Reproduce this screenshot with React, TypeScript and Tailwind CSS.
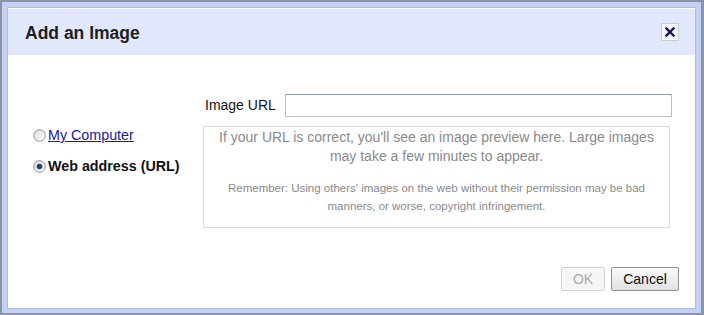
import React from "react";

function Radio({ checked }: { checked?: boolean }) {
  return (
    <svg width="13" height="13" viewBox="0 0 13 13" className="shrink-0">
      <defs>
        <linearGradient id={checked ? "rg1" : "rg0"} x1="0" y1="0" x2="1" y2="1">
          <stop offset="0" stopColor="#d8d8d8" />
          <stop offset="1" stopColor="#ffffff" />
        </linearGradient>
      </defs>
      <circle cx="6.5" cy="6.5" r="5.8" fill={`url(#${checked ? "rg1" : "rg0"})`} stroke="#8e959c" strokeWidth="1" />
      {checked && <circle cx="6.5" cy="6.5" r="2.8" fill="#2a3f6a" />}
    </svg>
  );
}

export default function App() {
  return (
    <div className="w-[704px] h-[315px] bg-[#c4d1f4] border-[2px] border-r-[3px] border-[#8c93a2] pl-[5px] pt-[5px] pr-[5px] pb-[4px] flex" style={{ fontFamily: "Arial, 'Liberation Sans', sans-serif" }}>
      <div className="flex-1 flex flex-col bg-white border border-[#aebde6]">
        <div className="h-[46px] bg-[#e1e8fb] flex items-center justify-between pl-[17px] pr-[16px] mt-[1px]">
          <div className="text-[17.5px] font-bold text-[#1e1e1e] pt-[2px]">Add an Image</div>
          <div className="w-[18px] h-[18px] border border-[#c8ccd6] bg-[#f4f6fc] flex items-center justify-center">
            <svg width="10" height="10" viewBox="0 0 10 10">
              <path d="M1.5 1.5 L8.5 8.5 M8.5 1.5 L1.5 8.5" stroke="#15155e" strokeWidth="2.4" strokeLinecap="square" />
            </svg>
          </div>
        </div>
        <div className="flex pt-[39px]">
          <div className="w-[195px] pl-[25px] pt-[34px] flex flex-col gap-[17px] text-[14px]">
            <div className="flex items-center gap-[2px]">
              <Radio />
              <span className="text-[#1a1a99] underline leading-[14px] text-[14.3px]">My Computer</span>
            </div>
            <div className="flex items-center gap-[2px]">
              <Radio checked />
              <span className="font-bold text-[#111] leading-[14px] text-[14.3px]">Web address (URL)</span>
            </div>
          </div>
          <div className="w-[471px] flex flex-col">
            <div className="flex items-center">
              <span className="text-[14px] text-[#111] ml-[2px] w-[80px]">Image URL</span>
              <div className="w-[387px] h-[23px] border border-[#b5bcc5] border-t-[#8f9aa6] rounded-[1px]" />
            </div>
            <div className="mt-[9px] w-[467px] h-[102px] border border-[#dcdcdc] text-center text-[#8a8a8a]">
              <div className="text-[14px] leading-[19px] pt-[1px] px-[4px]">
                If your URL is correct, you'll see an image preview here. Large images may take a few minutes to appear.
              </div>
              <div className="text-[11.5px] leading-[18px] mt-[13px] px-[16px]">
                Remember: Using others' images on the web without their permission may be bad manners, or worse, copyright infringement.
              </div>
            </div>
          </div>
        </div>
        <div className="flex-1" />
        <div className="flex justify-end gap-[6px] pr-[16px] pb-[17px]">
          <div className="w-[44px] h-[24px] border border-[#d2d2d2] rounded-[2px] bg-[#f6f6f6] flex items-center justify-center text-[14px] text-[#aaaaaa]">OK</div>
          <div className="w-[68px] h-[24px] border border-[#8f8f8f] rounded-[2px] bg-gradient-to-b from-[#fafafa] to-[#e2e2e2] flex items-center justify-center text-[14px] text-[#111]">Cancel</div>
        </div>
      </div>
    </div>
  );
}
